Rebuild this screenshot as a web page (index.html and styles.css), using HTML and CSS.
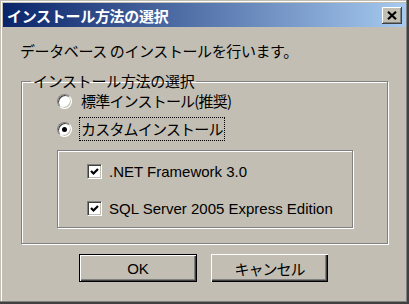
FILE: index.html
```html
<!DOCTYPE html>
<html lang="ja">
<head>
  <meta charset="UTF-8">
  <title>インストール方法の選択</title>
  <link rel="stylesheet" href="styles.css">
</head>
<body>

  <div class="window">
    <div class="titlebar">
      <span class="title">インストール方法の選択</span>
      <button class="close" aria-label="閉じる">
        <svg width="10" height="9" viewBox="0 0 10 9">
          <path d="M1 0.8 L9 8.2 M9 0.8 L1 8.2" stroke="#000" stroke-width="2.2" fill="none"/>
        </svg>
      </button>
    </div>

    <div class="content">
      <p class="intro">データベース のインストールを行います。</p>

      <fieldset class="group">
        <legend>インストール方法の選択</legend>
        <div class="options">
          <div class="option first">
            <span class="radio"></span>
            <span class="caption">標準インストール(推奨)</span>
          </div>
          <div class="option">
            <span class="radio checked"></span>
            <span class="caption focus">カスタムインストール</span>
          </div>

          <div class="subgroup">
            <div class="check-row first">
              <span class="check">
                <svg width="13" height="13" viewBox="0 0 13 13">
                  <path d="M3 6 L5.5 8.5 L10 4" stroke="#000" stroke-width="2.2" fill="none"/>
                </svg>
              </span>
              <span class="latin">.NET Framework 3.0</span>
            </div>
            <div class="check-row">
              <span class="check">
                <svg width="13" height="13" viewBox="0 0 13 13">
                  <path d="M3 6 L5.5 8.5 L10 4" stroke="#000" stroke-width="2.2" fill="none"/>
                </svg>
              </span>
              <span class="latin">SQL Server 2005 Express Edition</span>
            </div>
          </div>
        </div>
      </fieldset>

      <div class="buttons">
        <button class="btn default">OK</button>
        <button class="btn cancel">キャンセル</button>
      </div>
    </div>
  </div>

</body>
</html>
```

FILE: styles.css
```css
* {
  box-sizing: border-box;
}
body {
  margin: 0;
  padding: 0;
  background: #c2beb3;
  font-family: "Noto Sans CJK JP", "Liberation Sans", sans-serif;
  font-size: 15px;
  color: #000;
}
.window {
  width: 409px;
  height: 304px;
  padding: 3px;
  background: #c2beb3;
  box-shadow: inset -1px -1px 0 #404040, inset -2px -2px 0 #404040,
              inset -3px -3px 0 #808080, inset 1px 1px 0 #c2beb3,
              inset 2px 2px 0 #fff;
}
.titlebar {
  height: 24px;
  display: flex;
  align-items: center;
  justify-content: space-between;
  padding: 0 4px 0 4px;
  background: linear-gradient(to right, #0a246a, #a6caf0);
  color: #fff;
  font-weight: bold;
  letter-spacing: -0.3px;
}
.close {
  width: 20px;
  height: 17px;
  padding: 0;
  border: none;
  background: #c2beb3;
  display: flex;
  align-items: center;
  justify-content: center;
  box-shadow: inset -1px -1px 0 #404040, inset 1px 1px 0 #fff,
              inset -2px -2px 0 #808080;
}
.content {
  padding: 0 18px 0 17px;
}
.intro {
  margin: 14px 0 0 0;
  line-height: 20px;
  letter-spacing: -0.4px;
}
.group {
  margin: 10px 0 0 1px;
  padding: 0;
  min-inline-size: 0;
  border: 1px solid #808080;
  box-shadow: 1px 1px 0 #fff, inset 1px 1px 0 #fff;
}
.group legend {
  margin-left: 9px;
  padding: 0 2px;
  line-height: 20px;
  letter-spacing: -0.3px;
}
.options {
  padding: 0 18px 15px 35px;
}
.option {
  display: flex;
  align-items: center;
  height: 24px;
  margin-top: 6px;
}
.option.first {
  height: 20px;
  margin-top: 0;
}
.radio {
  position: relative;
  width: 15px;
  height: 15px;
  border-radius: 50%;
  background: #fff;
  border: 1px solid;
  border-color: #808080 #fff #fff #808080;
  box-shadow: inset 1px 1px 0 #404040, inset -1px -1px 0 #c2beb3;
  margin-right: 7px;
}
.radio.checked::after {
  content: "";
  position: absolute;
  left: 4px;
  top: 4px;
  width: 5px;
  height: 5px;
  border-radius: 50%;
  background: #000;
}
.caption {
  border: 1px dotted transparent;
  padding: 0 1px;
  line-height: 22px;
  letter-spacing: -0.8px;
}
.caption.focus {
  border-color: #000;
}
.subgroup {
  margin-top: 9px;
  width: 296px;
  height: 78px;
  padding: 10px 0 0 29px;
  border: 1px solid #808080;
  box-shadow: 1px 1px 0 #fff, inset 1px 1px 0 #fff;
}
.check-row {
  display: flex;
  align-items: center;
  height: 20px;
  margin-top: 17px;
}
.check-row.first {
  margin-top: 0;
}
.check {
  width: 15px;
  height: 15px;
  background: #fff;
  border: 1px solid;
  border-color: #808080 #fff #fff #808080;
  box-shadow: inset 1px 1px 0 #404040, inset -1px -1px 0 #c2beb3;
  display: flex;
  align-items: center;
  justify-content: center;
  margin-right: 7px;
}
.latin {
  font-family: "Liberation Sans", sans-serif;
  font-size: 15px;
}
.buttons {
  display: flex;
  justify-content: center;
  gap: 14px;
  margin-top: 10px;
  padding-right: 1px;
}
.btn {
  height: 28px;
  padding: 0;
  border: none;
  background: #c2beb3;
  font-family: "Noto Sans CJK JP", "Liberation Sans", sans-serif;
  font-size: 15px;
  color: #000;
}
.btn.default {
  width: 118px;
  border: 1px solid #000;
  font-family: "Liberation Sans", sans-serif;
  box-shadow: inset 1px 1px 0 #fff, inset -1px -1px 0 #404040,
              inset -2px -2px 0 #808080;
}
.btn.cancel {
  width: 117px;
  box-shadow: inset 1px 1px 0 #fff, inset -1px -1px 0 #000,
              inset -2px -2px 0 #404040, inset -3px -3px 0 #808080;
  letter-spacing: -1px;
}
```
